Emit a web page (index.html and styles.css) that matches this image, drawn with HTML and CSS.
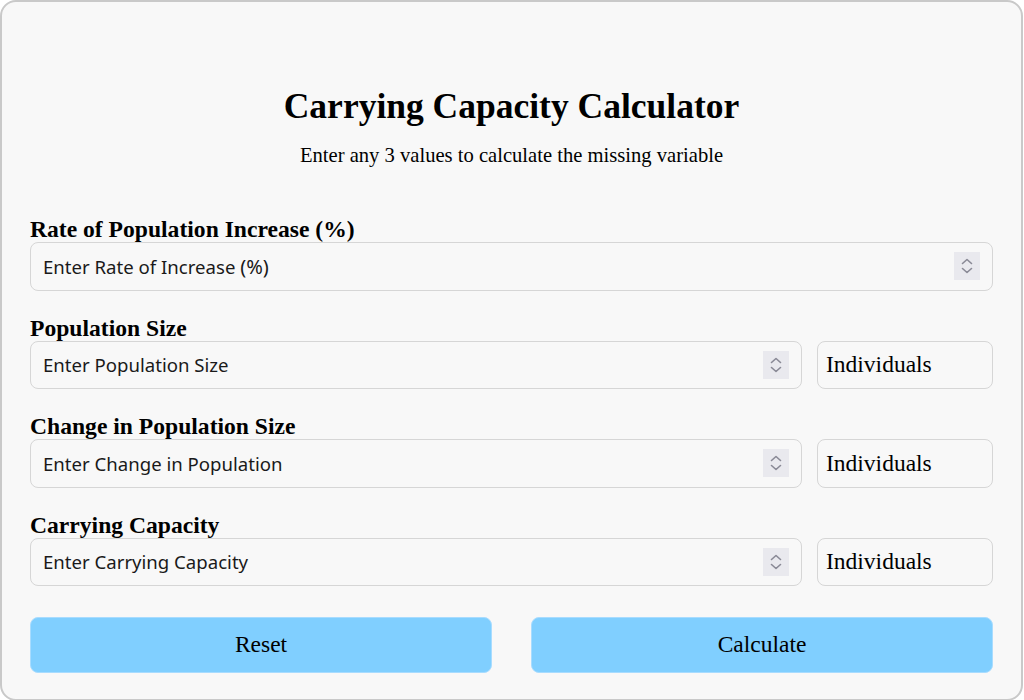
FILE: index.html
```html
<!DOCTYPE html>
<html>
<head>
<meta charset="utf-8">
<link rel="stylesheet" href="styles.css">
</head>
<body>
<div class="card">
  <h1 class="title">Carrying Capacity Calculator</h1>
  <p class="subtitle">Enter any 3 values to calculate the missing variable</p>

  <div class="group">
    <label class="label">Rate of Population Increase (%)</label>
    <div class="row">
      <div class="field">
        <span class="placeholder">Enter Rate of Increase <span class="paren">(%)</span></span>
        <span class="spin"><svg width="12" height="20" viewBox="0 0 12 20"><path d="M1.5 7.5 L6 3.5 L10.5 7.5 M1.5 12.5 L6 16.5 L10.5 12.5" fill="none" stroke="#8a8a96" stroke-width="1.6" stroke-linecap="round" stroke-linejoin="round"/></svg></span>
      </div>
    </div>
  </div>

  <div class="group">
    <label class="label">Population Size</label>
    <div class="row">
      <div class="field">
        <span class="placeholder">Enter Population Size</span>
        <span class="spin"><svg width="12" height="20" viewBox="0 0 12 20"><path d="M1.5 7.5 L6 3.5 L10.5 7.5 M1.5 12.5 L6 16.5 L10.5 12.5" fill="none" stroke="#8a8a96" stroke-width="1.6" stroke-linecap="round" stroke-linejoin="round"/></svg></span>
      </div>
      <div class="unit">Individuals</div>
    </div>
  </div>

  <div class="group">
    <label class="label">Change in Population Size</label>
    <div class="row">
      <div class="field">
        <span class="placeholder">Enter Change in Population</span>
        <span class="spin"><svg width="12" height="20" viewBox="0 0 12 20"><path d="M1.5 7.5 L6 3.5 L10.5 7.5 M1.5 12.5 L6 16.5 L10.5 12.5" fill="none" stroke="#8a8a96" stroke-width="1.6" stroke-linecap="round" stroke-linejoin="round"/></svg></span>
      </div>
      <div class="unit">Individuals</div>
    </div>
  </div>

  <div class="group">
    <label class="label">Carrying Capacity</label>
    <div class="row">
      <div class="field">
        <span class="placeholder">Enter Carrying Capacity</span>
        <span class="spin"><svg width="12" height="20" viewBox="0 0 12 20"><path d="M1.5 7.5 L6 3.5 L10.5 7.5 M1.5 12.5 L6 16.5 L10.5 12.5" fill="none" stroke="#8a8a96" stroke-width="1.6" stroke-linecap="round" stroke-linejoin="round"/></svg></span>
      </div>
      <div class="unit">Individuals</div>
    </div>
  </div>

  <div class="buttons">
    <button class="btn">Reset</button>
    <button class="btn">Calculate</button>
  </div>
</div>
</body>
</html>
```

FILE: styles.css
```css
html, body {
  margin: 0;
  padding: 0;
  background: #ffffff;
}
body {
  font-family: "Liberation Serif", "Times New Roman", serif;
  color: #000;
}
.card {
  box-sizing: border-box;
  width: 1023px;
  height: 701px;
  border: 2px solid #c9c9c9;
  border-radius: 16px;
  background: #f8f8f8;
  padding: 82px 28px 28px 28px;
}
.title {
  margin: 0;
  text-align: center;
  font-size: 35.5px;
  line-height: 44px;
  font-weight: bold;
}
.subtitle {
  margin: 15px 0 0 0;
  text-align: center;
  font-size: 20.6px;
  line-height: 24px;
}
.group {
  margin-top: 49px;
}
.group + .group {
  margin-top: 24px;
}
.label {
  display: block;
  font-size: 23.6px;
  font-weight: bold;
  line-height: 26px;
}
.row {
  display: flex;
  gap: 15px;
}
.field {
  flex: 1;
  box-sizing: border-box;
  height: 48.5px;
  border: 1px solid #d6d6d6;
  border-radius: 8px;
  background: #f8f8f8;
  display: flex;
  align-items: center;
  justify-content: space-between;
  padding: 0 12px 0 12px;
}
.placeholder {
  font-family: "Noto Sans", "DejaVu Sans", sans-serif;
  font-size: 18.6px;
  color: #1a1a1a;
}
.paren {
  font-size: 20px;
}
.spin {
  width: 26px;
  height: 28px;
  background: #e9e9ee;
  display: flex;
  align-items: center;
  justify-content: center;
}
.unit {
  box-sizing: border-box;
  width: 176px;
  height: 48.5px;
  border: 1px solid #d6d6d6;
  border-radius: 8px;
  display: flex;
  align-items: center;
  padding-left: 8px;
  font-size: 23.5px;
}
.buttons {
  display: grid;
  grid-template-columns: 1fr 1fr;
  gap: 39px;
  margin-top: 30.5px;
}
.btn {
  height: 56px;
  border: 1px solid #a8dcff;
  border-radius: 8px;
  background: #80cfff;
  font-family: "Liberation Serif", "Times New Roman", serif;
  font-size: 23.5px;
  color: #000;
}
```
